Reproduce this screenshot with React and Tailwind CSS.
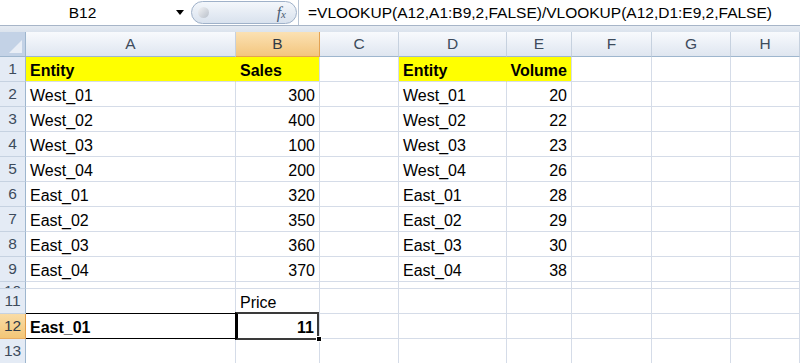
import React from 'react';

const font = { fontFamily: '"Liberation Sans", Arial, sans-serif' };

const cols = ['A', 'B', 'C', 'D', 'E', 'F', 'G', 'H'];

const data = [
  ['Entity', 'Sales', 'Entity', 'Volume'],
  ['West_01', 300, 'West_01', 20],
  ['West_02', 400, 'West_02', 22],
  ['West_03', 100, 'West_03', 23],
  ['West_04', 200, 'West_04', 26],
  ['East_01', 320, 'East_01', 28],
  ['East_02', 350, 'East_02', 29],
  ['East_03', 360, 'East_03', 30],
  ['East_04', 370, 'East_04', 38],
];

const cellBase =
  'relative flex items-end pb-[1px] px-[4px] border-r border-b border-[#d5dce8] whitespace-nowrap overflow-hidden leading-[18px] text-[16px] text-black';

const FormulaBar = () => (
  <div className="flex h-[26px] bg-white border-b border-[#a7b5c8]">
    <div className="flex items-center w-[191px] shrink-0">
      <div className="w-[165px] text-center text-[15.5px] text-black">B12</div>
      <div className="w-0 h-0 border-l-[4px] border-r-[4px] border-t-[5px] border-l-transparent border-r-transparent border-t-black ml-[11px]" />
    </div>
    <div className="relative flex items-center w-[106px] shrink-0 mt-[1px] mb-[1px] rounded-full border border-[#9fb1c9] bg-linear-to-b from-[#f4f7fb] to-[#d9e2ee]">
      <div className="ml-[6px] w-[11px] h-[11px] rounded-full bg-linear-to-br from-[#f3f4f6] to-[#b9c0ca]" />
      <span className="ml-auto mr-[10px] text-[16px] italic text-[#4b5c72]" style={{ fontFamily: '"Liberation Serif", serif' }}>
        f<span className="text-[11px]">x</span>
      </span>
    </div>
    <div className="flex items-center flex-1 pl-[9px] ml-[1px] border-l border-[#b8c4d4] text-[15.5px] text-black whitespace-nowrap overflow-hidden">
      =VLOOKUP(A12,A1:B9,2,FALSE)/VLOOKUP(A12,D1:E9,2,FALSE)
    </div>
  </div>
);

const RowHead = ({ n, active, tiny }) => (
  <div
    className={
      'flex justify-center border-r border-b text-[15.5px] leading-[18px] overflow-hidden ' +
      (tiny ? 'items-end ' : 'items-center ') +
      (active
        ? 'bg-linear-to-b from-[#f9dca6] to-[#f3c677] border-r-[#e19b48] border-b-[#e9ad63] text-[#2f3a46]'
        : 'bg-[#e4ebf5] border-r-[#9eb6ce] border-b-[#c6d2e1] text-[#3d4b5c]')
    }
  >
    <span className={tiny ? 'translate-y-[12px]' : ''}>{n}</span>
  </div>
);

const Cell = ({ children, right, bold, yellow, className = '' }) => (
  <div
    className={
      cellBase +
      (right ? ' justify-end' : '') +
      (bold ? ' font-bold' : '') +
      (yellow ? ' bg-[#ffff00]' : '') +
      ' ' +
      className
    }
  >
    {children}
  </div>
);

export default function App() {
  return (
    <div className="w-[800px] h-[363px] overflow-hidden bg-white" style={font}>
      <FormulaBar />
      <div className="h-[6px] bg-linear-to-b from-[#e6ebf2] to-[#dbe3ed]" />
      <div className="grid grid-cols-[26px_210px_84px_79px_108px_65px_80px_79px_1fr] grid-rows-[repeat(10,25px)_7px_repeat(3,25px)]">
        {/* corner */}
        <div className="relative bg-[#c3d2e6] border-r border-b border-[#9eb6ce]">
          <svg className="absolute right-[3px] bottom-[3px]" width="13" height="13" viewBox="0 0 13 13">
            <path d="M13 0 L13 13 L0 13 Z" fill="#e9eef6" />
          </svg>
        </div>
        {cols.map((c) => (
          <div
            key={c}
            className={
              'flex items-center justify-center border-r border-b text-[15.5px] ' +
              (c === 'B'
                ? 'bg-linear-to-b from-[#fbe1b3] to-[#f3c67e] border-r-[#e3a253] border-b-[#e3a253] text-[#2f3a46]'
                : 'bg-linear-to-b from-[#f8fafd] to-[#dfe6f0] border-r-[#c6d1df] border-b-[#9eb6ce] text-[#3d4b5c]')
            }
          >
            {c}
          </div>
        ))}

        {data.map((r, i) => {
          const head = i === 0;
          return (
            <React.Fragment key={i}>
              <RowHead n={i + 1} />
              <Cell bold={head} yellow={head} className={head ? 'border-r-[#ffff00]' : ''}>{r[0]}</Cell>
              <Cell bold={head} yellow={head} right={!head}>{r[1]}</Cell>
              <Cell />
              <Cell bold={head} yellow={head} className={head ? 'border-r-[#ffff00]' : ''}>{r[2]}</Cell>
              <Cell bold={head} yellow={head} right>{r[3]}</Cell>
              <Cell />
              <Cell />
              <Cell />
            </React.Fragment>
          );
        })}

        {/* row 10, almost hidden */}
        <RowHead n={10} tiny />
        {cols.map((c) => (
          <Cell key={'r10' + c} />
        ))}

        {/* row 11 */}
        <RowHead n={11} />
        <Cell className="border-b-black" />
        <Cell>Price</Cell>
        {cols.slice(2).map((c) => (
          <Cell key={'r11' + c} />
        ))}

        {/* row 12 */}
        <RowHead n={12} active />
        <Cell bold className="border-b-black border-r-black">East_01</Cell>
        <Cell bold right className="overflow-visible">
          <span className="pr-[1px]">11</span>
          <div className="absolute z-10 -left-[1px] -top-[2px] right-0 -bottom-[2px] border-2 border-[#3a3a3a] border-l-[3px] border-l-black pointer-events-none" />
          <div className="absolute z-20 -right-[3px] -bottom-[4px] w-[6px] h-[6px] bg-black border border-white" />
        </Cell>
        {cols.slice(2).map((c) => (
          <Cell key={'r12' + c} />
        ))}

        {/* row 13 */}
        <RowHead n={13} />
        {cols.map((c) => (
          <Cell key={'r13' + c} />
        ))}
      </div>
    </div>
  );
}
